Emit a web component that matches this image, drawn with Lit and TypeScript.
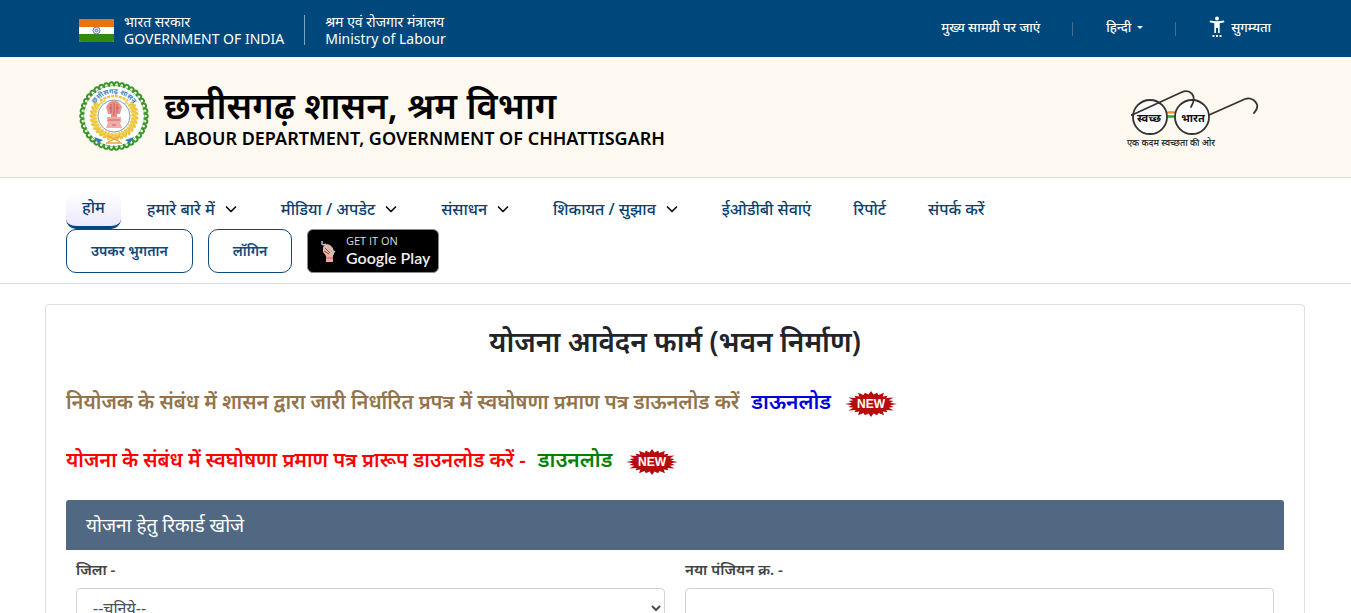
import { LitElement, html, css, svg } from "lit";
import { customElement } from "lit/decorators.js";

const chevron = html`<svg class="chev" viewBox="0 0 16 16" width="16" height="16" aria-hidden="true">
  <path d="M3.500 6l4.500 4.500L12.500 6" fill="none" stroke="#111" stroke-width="1.700" stroke-linecap="round" stroke-linejoin="round"/>
</svg>`;

const flag = html`<svg width="35" height="23" viewBox="0 0 35 23" role="img" aria-label="भारत का ध्वज">
  <clipPath id="f"><rect width="35" height="23" rx="2"/></clipPath>
  <g clip-path="url(#f)">
    <rect width="35" height="23" fill="#fff"/>
    <rect width="35" height="8" fill="#e8740c"/>
    <rect y="15" width="35" height="8" fill="#2f8a12"/>
  </g>
  <circle cx="17.500" cy="11.500" r="3.500" fill="#e4e6f3" stroke="#6d78b5" stroke-width="1"/>
  <circle cx="17.500" cy="11.500" r="1.300" fill="none" stroke="#5966a8" stroke-width=".9"/>
</svg>`;

const ring = Array.from({ length: 38 }, (_, i) => {
  const deg = (i / 38) * 360;
  return svg`<path transform=${`rotate(${deg} 35 35)`} d="M64.500 32.500q4.500.2 4.300 2.700t-3.300 2" fill="none" stroke="#3a962c" stroke-width="2"/>`;
});

const grains = Array.from({ length: 27 }, (_, i) => {
  const deg = -52 + (i / 26) * 284;
  return svg`<g transform=${`rotate(${deg} 35 35)`}>
    <ellipse cx="56.500" cy="35" rx="3.600" ry="1.700" fill="#ecc53a" transform="rotate(38 56.500 35)"/>
    <ellipse cx="54" cy="36" rx="2.800" ry="1.500" fill="#f0d25c" transform="rotate(-38 54 36)"/>
  </g>`;
});

const emblem = html`<svg width="70" height="70" viewBox="0 0 70 70" role="img" aria-label="छत्तीसगढ़ शासन">
  <defs><path id="arc" d="M12.500 35a22.500 22.500 0 0 1 45 0"/></defs>
  <circle cx="35" cy="35" r="31" fill="#fff"/>
  <circle cx="35" cy="35" r="30.500" fill="none" stroke="#8cc47c" stroke-width="1"/>
  ${ring}
  ${grains}
  <path d="M14 17a28 28 0 0 1 42 0l-6 6a20 20 0 0 0-30 0z" fill="#fff"/>
  <path d="M21 20q14-10 28 0" fill="none" stroke="#ecc53a" stroke-width="2.500" stroke-dasharray="3 1"/>
  <circle cx="35" cy="35" r="16" fill="#fff" stroke="#6c93ae" stroke-width=".9"/>
  <text class="seal"><textPath href="#arc" startOffset="50%" text-anchor="middle">छत्तीसगढ़ शासन</textPath></text>
  <g fill="#e9928e">
    <path d="M31 21q4-3 8 0l2 2q3 2 1 6l-1 4h-3v3h-6v-3h-3l-1-4q-2-4 1-6z"/>
    <path d="M28 36h14v5H28zM29 41h12l2 6H27z" opacity=".75"/>
  </g>
  <g stroke="#c25a58" stroke-width=".9" fill="none">
    <path d="M32 23v9M35 22v13M38 23v9M30 27h3M37 27h3M29 39h12M33 44h4"/>
  </g>
  <path d="M15 56l9 3-5 3zM55 56l-9 3 5 3z" fill="#3579bd"/>
  <path d="M29 61l12-6M41 61l-12-6M27 62h16" stroke="#eda338" stroke-width="1.300"/>
</svg>`;

const swachh = html`<svg width="134" height="64" viewBox="0 0 134 64" role="img" aria-label="स्वच्छ भारत">
  <g stroke="#39332f" fill="none" stroke-linecap="round">
    <path d="M42 28.500h7" stroke="#ee9330" stroke-width="2.500"/>
    <path d="M42 30.500h7" stroke="#fff" stroke-width="1.500"/>
    <path d="M42 32.500h7" stroke="#35a03b" stroke-width="2.500"/>
    <circle cx="24" cy="33" r="17" fill="#fff" stroke-width="1.800"/>
    <circle cx="66" cy="33" r="17" fill="#fff" stroke-width="1.800"/>
    <path d="M6 31L55 8.500c9-4 17 3 10 14.500" stroke-width="1.800"/>
    <path d="M83 31l36-16c8-3 17 6 9 14" stroke-width="1.800"/>
    <circle cx="6.500" cy="31" r="1" fill="#39332f"/>
  </g>
  <text class="lens" x="23" y="38" text-anchor="middle">स्वच्छ</text>
  <text class="lens" x="67" y="38" text-anchor="middle">भारत</text>
  <text class="motto" x="1" y="62">एक कदम स्वच्छता की ओर</text>
</svg>`;

const accessIcon = html`<svg width="16" height="22" viewBox="0 0 16 22" aria-hidden="true">
  <g fill="#fff">
    <circle cx="8" cy="2.500" r="2"/>
    <path d="M1 4.500c4.500 1 9.500 1 14 0l.4 1.700-4.700 1V17H9v-5H7v5H5.300V7.200L.6 6.200z"/>
    <rect x="3.500" y="19" width="2" height="2"/><rect x="7" y="19" width="2" height="2"/><rect x="10.500" y="19" width="2" height="2"/>
  </g>
</svg>`;

const playBadge = html`<svg width="132" height="44" viewBox="0 0 132 44" aria-hidden="true">
  <rect x=".5" y=".5" width="131" height="43" rx="5.500" fill="#000" stroke="#8b8b8b"/>
  <path d="M19 26h7v7h-7z" fill="#f0a7a4"/>
  <path d="M16 18l4-3 3 1 3 3 1 5-2 4h-5l-4-5z" fill="#eab59f"/>
  <path d="M18 19l5 5M21 18l4 5M17 22l5 3" stroke="#7b443e" stroke-width=".9"/>
  <path d="M15 12v3l2 1 2-1M18 16l8 7M26 22l2 1M26 23v3" fill="none" stroke="#b3c8d4" stroke-width="1.400"/>
  <path d="M19 29h7" stroke="#cf6064" stroke-width="1"/>
  <text class="get" x="39" y="16">GET IT ON</text>
  <text class="play" x="39" y="35">Google Play</text>
</svg>`;

const burst = Array.from({ length: 48 }, (_, i) => {
  const a = (i / 48) * Math.PI * 2;
  const k = i % 2 ? 0.74 : i % 4 ? 0.9 : 1;
  return `${(26 + 26 * k * Math.cos(a)).toFixed(1)},${(13 + 13 * k * Math.sin(a)).toFixed(1)}`;
}).join(" ");

const newBadge = html`<svg class="new" width="52" height="26" viewBox="0 0 52 26" role="img" aria-label="NEW">
  <polygon points=${burst} fill="#b50d0d"/>
  <text class="newtext" x="26" y="17" text-anchor="middle">NEW</text>
</svg>`;

const menu: [string, boolean][] = [
  ["हमारे बारे में", true],
  ["मीडिया / अपडेट", true],
  ["संसाधन", true],
  ["शिकायत / सुझाव", true],
  ["ईओडीबी सेवाएं", false],
  ["रिपोर्ट", false],
  ["संपर्क करें", false],
];

@customElement("app-root")
export class AppRoot extends LitElement {
  static styles = css`
    :host {
      display: block;
      background: #fff;
      color: #212529;
      font-family: "Noto Sans", "Noto Sans Devanagari", sans-serif;
      font-size: 16px;
      line-height: 24px;
    }
    * { box-sizing: border-box; }
    a { color: inherit; text-decoration: none; }
    svg { display: block; flex: none; }
    .top {
      display: flex; align-items: center; justify-content: space-between;
      min-height: 57px; padding: 3px 80px 0 79px;
      background: #00477b; color: #fff; font-weight: 500;
    }
    .gov, .tools { display: flex; align-items: center; }
    .pair { font-size: 14px; line-height: 17px; font-weight: 400; }
    .pair span { display: block; }
    .flagpair { display: flex; align-items: center; gap: 10px; }
    .ministry { margin-left: 20px; padding-left: 20px; border-left: 1px solid #7fa3bd; }
    .ministry .pair { margin: -2px 0; }
    .tools { padding-bottom: 6px; font-size: 13px; line-height: 20px; }
    .tools button {
      display: flex; align-items: center; gap: 6px; padding: 0; border: 0;
      background: none; color: inherit; font: inherit;
    }
    .caret { border: 3px solid transparent; border-top-color: #fff; border-bottom: 0; }
    .bar { width: 1px; height: 14px; margin: 3px 33px 0 32px; background: #456f91; }
    .brand {
      display: flex; align-items: center; justify-content: space-between;
      min-height: 121px; padding: 0 91px 2px 79px;
      background: #fdf8f0; border-bottom: 1px solid #dcdcdc; color: #000;
    }
    .logo { display: flex; align-items: center; gap: 15px; }
    .logo h1 { margin: 2px 0 0; font-size: 36px; line-height: 42px; font-weight: 600; }
    .logo p { margin: 0; font-size: 18px; line-height: 22px; font-weight: 600; }
    .seal { font: 700 7px "Noto Sans", sans-serif; fill: #3b82c4; }
    .lens { font: 700 11px "Noto Sans", sans-serif; fill: #111; }
    .motto { font: 500 9px "Noto Sans", sans-serif; fill: #222; }
    nav { padding: 14px 66px 10px; border-bottom: 1px solid #dcdcdc; color: #0b3f70; }
    .menu { display: flex; flex-wrap: wrap; gap: 0 10px; margin: 0; padding: 0; list-style: none; font-weight: 500; }
    .menu a { display: flex; align-items: center; gap: 8px; height: 37px; padding: 0 16px 4px; font-size: 16px; }
    .menu .home {
      border-bottom: 3px solid #00477b; border-radius: 10px;
      background: linear-gradient(#fff, #ebe8fb);
    }
    .actions { display: flex; gap: 15px; }
    .btn {
      display: flex; align-items: center; height: 44px; padding: 0 24px;
      border: 1px solid #0b4a7e; border-radius: 10px; color: #0b4a7e;
      font-size: 14px; font-weight: 600;
    }
    .get { font: 400 11px "Open Sans", sans-serif; fill: #ddd; }
    .play { font: 600 16px Lato, sans-serif; fill: #eee; }
    main { margin: 20px 46px 0 45px; padding: 18px 20px 40px; border: 1px solid #dfdfdf; border-radius: 4px; }
    h2 { margin: 0; text-align: center; font-size: 28px; line-height: 36px; font-weight: 600; }
    .notice { display: flex; align-items: center; margin: 22px 0 0; font-size: 20px; line-height: 36px; font-weight: 600; }
    h2 + .notice { margin-top: 25px; }
    .notice a { margin-left: 12px; font-size: 21px; line-height: 34px; padding-bottom: 2px; }
    .brown { color: #93734a; }
    .red { color: #f00; }
    .blue { color: #00d; }
    .green { color: #008000; }
    .new { margin: 4px 0 0 14px; }
    .newtext { font: 700 12px "Liberation Sans", sans-serif; fill: #fff; }
    h3 {
      margin: 22px 0 0; padding: 0 20px; border-radius: 3px 3px 0 0;
      background: #506882; color: #fff; font-size: 19px; line-height: 50px; font-weight: 400;
    }
    .fields { display: grid; grid-template-columns: 1fr 1fr; gap: 20px; padding: 7px 10px 0; }
    .fields label { display: block; margin-bottom: 7px; color: #444; font-size: 15px; font-weight: 600; }
    .fields select, .fields input {
      display: block; width: 100%; height: 40px; padding: 0 12px;
      border: 1px solid #ced4da; border-radius: 4px; background: #fff;
      color: #495057; font: 400 16px "Noto Sans", sans-serif;
    }
    .fields select { padding: 0 0 0 12px; }
  `;

  render() {
    return html`
      <div class="top">
        <div class="gov">
          <div class="flagpair">${flag}
            <div class="pair"><span>भारत सरकार</span><span>GOVERNMENT OF INDIA</span></div>
          </div>
          <div class="ministry">
            <div class="pair"><span>श्रम एवं रोजगार मंत्रालय</span><span>Ministry of Labour</span></div>
          </div>
        </div>
        <div class="tools">
          <a href="#main">मुख्य सामग्री पर जाएं</a>
          <span class="bar"></span>
          <button type="button">हिन्दी <span class="caret"></span></button>
          <span class="bar"></span>
          <button type="button">${accessIcon}सुगम्यता</button>
        </div>
      </div>
      <header class="brand">
        <div class="logo">${emblem}
          <div><h1>छत्तीसगढ़ शासन, श्रम विभाग</h1><p>LABOUR DEPARTMENT, GOVERNMENT OF CHHATTISGARH</p></div>
        </div>
        ${swachh}
      </header>
      <nav>
        <ul class="menu">
          <li><a class="home" href="#">होम</a></li>
          ${menu.map(([label, sub]) => html`<li><a href="#">${label}${sub ? chevron : ""}</a></li>`)}
        </ul>
        <div class="actions">
          <a class="btn" href="#">उपकर भुगतान</a>
          <a class="btn" href="#">लॉगिन</a>
          <a href="#" aria-label="Google Play">${playBadge}</a>
        </div>
      </nav>
      <main id="main">
        <h2>योजना आवेदन फार्म (भवन निर्माण)</h2>
        <p class="notice brown">नियोजक के संबंध में शासन द्वारा जारी निर्धारित प्रपत्र में स्वघोषणा प्रमाण पत्र डाऊनलोड करें <a class="blue" href="#">डाऊनलोड</a>${newBadge}</p>
        <p class="notice red">योजना के संबंध में स्वघोषणा प्रमाण पत्र प्रारूप डाउनलोड करें - <a class="green" href="#">डाउनलोड</a>${newBadge}</p>
        <h3>योजना हेतु रिकार्ड खोजे</h3>
        <div class="fields">
          <div><label for="district">जिला -</label><select id="district"><option>--चुनिये--</option></select></div>
          <div><label for="regno">नया पंजियन क्र. -</label><input id="regno" type="text" /></div>
        </div>
      </main>
    `;
  }
}
